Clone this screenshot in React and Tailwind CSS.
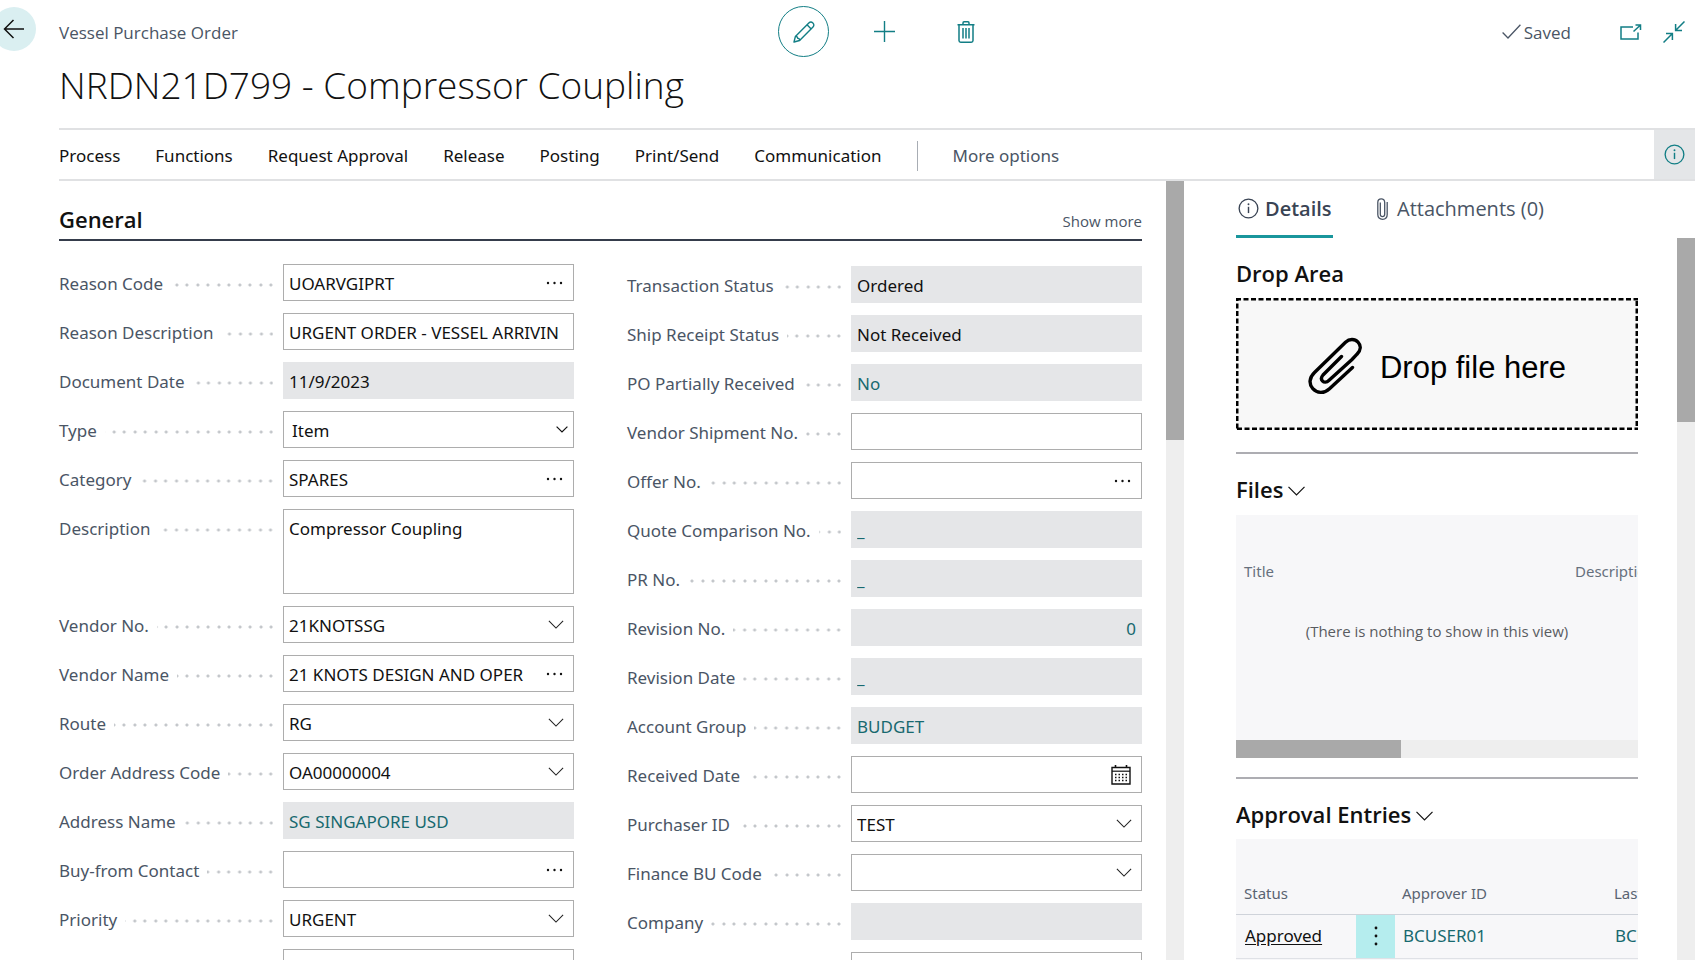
import React from "react";

const UI_FONT = "font-['Noto_Sans','Open_Sans',sans-serif]";
const HEADING_FONT = "font-['Open_Sans','Noto_Sans',sans-serif]";

function Chevron({ className }) {
  return (
    <svg viewBox="0 0 18 10" fill="none" stroke="currentColor" className={className} aria-hidden="true">
      <path d="M1 .8 9 9 17 .8" strokeWidth="1.2" />
    </svg>
  );
}

function SmallChevron({ className }) {
  return (
    <svg viewBox="0 0 12 7" fill="none" stroke="currentColor" className={className} aria-hidden="true">
      <path d="M.6.6 6 6 11.4.6" strokeWidth="1.2" />
    </svg>
  );
}

function Ellipsis({ className }) {
  return (
    <svg viewBox="0 0 17 4" fill="currentColor" className={className} aria-hidden="true">
      <circle cx="2" cy="2" r="1.2" />
      <circle cx="8.5" cy="2" r="1.2" />
      <circle cx="15" cy="2" r="1.2" />
    </svg>
  );
}

function CalendarIcon() {
  return (
    <svg viewBox="0 0 20 20" className="size-5" fill="none" stroke="currentColor" aria-hidden="true">
      <path d="M1 2.5h18V19H1z" strokeWidth="1.4" />
      <path d="M1 6.2h18" strokeWidth="1.2" />
      <path d="M4.5 0v3M15.5 0v3" strokeWidth="1.6" />
      <path d="M4 9.5h12.5M4 12.5h12.5M4 15.5h12.5" strokeWidth="1.3" strokeDasharray="1.5 2" />
    </svg>
  );
}

function InfoIcon({ className }) {
  return (
    <svg viewBox="0 0 22 22" fill="none" stroke="currentColor" className={className} aria-hidden="true">
      <circle cx="11" cy="11" r="9.8" strokeWidth="1.4" />
      <path d="M11 9.2v6.6" strokeWidth="1.5" />
      <circle cx="11" cy="6.6" r="1" fill="currentColor" stroke="none" />
    </svg>
  );
}

const leftFields = [
  { label: "Reason Code", value: "UOARVGIPRT", kind: "assist" },
  { label: "Reason Description", value: "URGENT ORDER - VESSEL ARRIVIN", kind: "text" },
  { label: "Document Date", value: "11/9/2023", kind: "readonly" },
  { label: "Type", value: "Item", kind: "option" },
  { label: "Category", value: "SPARES", kind: "assist" },
  { label: "Description", value: "Compressor Coupling", kind: "area" },
  { label: "Vendor No.", value: "21KNOTSSG", kind: "select" },
  { label: "Vendor Name", value: "21 KNOTS DESIGN AND OPER", kind: "assist" },
  { label: "Route", value: "RG", kind: "select" },
  { label: "Order Address Code", value: "OA00000004", kind: "select" },
  { label: "Address Name", value: "SG SINGAPORE USD", kind: "link" },
  { label: "Buy-from Contact", value: "", kind: "assist" },
  { label: "Priority", value: "URGENT", kind: "select" },
  { label: "", value: "", kind: "text" },
];

const rightFields = [
  { label: "Transaction Status", value: "Ordered", kind: "readonly" },
  { label: "Ship Receipt Status", value: "Not Received", kind: "readonly" },
  { label: "PO Partially Received", value: "No", kind: "link" },
  { label: "Vendor Shipment No.", value: "", kind: "text" },
  { label: "Offer No.", value: "", kind: "assist" },
  { label: "Quote Comparison No.", value: "_", kind: "link" },
  { label: "PR No.", value: "_", kind: "link" },
  { label: "Revision No.", value: "0", kind: "number" },
  { label: "Revision Date", value: "_", kind: "link" },
  { label: "Account Group", value: "BUDGET", kind: "link" },
  { label: "Received Date", value: "", kind: "date" },
  { label: "Purchaser ID", value: "TEST", kind: "select" },
  { label: "Finance BU Code", value: "", kind: "select" },
  { label: "Company", value: "", kind: "readonly" },
  { label: "", value: "", kind: "text" },
];

const readonlyBox = "block h-[37px] w-full bg-[#e5e6e8] px-[6px] pt-[2px] outline-none";
const editBox = "block h-[37px] w-full border border-[#adadad] bg-white";

function Control({ id, field }) {
  const { kind, value } = field;
  if (kind === "readonly") return <input id={id} readOnly value={value} className={`${readonlyBox} text-[#111]`} />;
  if (kind === "link") return <input id={id} readOnly value={value} className={`${readonlyBox} text-[#17696f]`} />;
  if (kind === "number")
    return <input id={id} readOnly value={value} className={`${readonlyBox} text-right text-[#17696f]`} />;
  if (kind === "area")
    return (
      <textarea
        id={id}
        defaultValue={value}
        className="block h-[85px] w-full resize-none border border-[#adadad] bg-white px-[5px] pt-[7px] leading-6 text-[#111] outline-none"
      />
    );
  if (kind === "text")
    return (
      <input
        id={id}
        aria-label={field.label || "Additional field"}
        defaultValue={value}
        className={`${editBox} px-[5px] pt-[2px] text-[#111] outline-none`}
      />
    );
  if (kind === "select" || kind === "option")
    return (
      <div className="relative">
        <select
          id={id}
          defaultValue={value}
          className={`${editBox} appearance-none pt-[2px] pr-9 text-[#111] outline-none ${kind === "option" ? "pl-[8px]" : "pl-[5px]"}`}
        >
          <option value={value}>{value}</option>
        </select>
        {kind === "option" ? (
          <SmallChevron className="pointer-events-none absolute top-[15px] right-[6px] h-[7px] w-3 text-[#111]" />
        ) : (
          <Chevron className="pointer-events-none absolute top-[14px] right-[10px] h-[9px] w-4 text-[#222]" />
        )}
      </div>
    );
  return (
    <div className={`${editBox} flex items-center pr-[10px] pl-[5px]`}>
      <input id={id} defaultValue={value} className="h-full min-w-0 flex-1 bg-transparent pt-[2px] text-[#111] outline-none" />
      <button type="button" aria-label={`Choose ${field.label}`} className="ml-3 shrink-0 pt-px text-[#111]">
        {kind === "date" ? <CalendarIcon /> : <Ellipsis className="h-1 w-[17px]" />}
      </button>
    </div>
  );
}

function FieldColumn({ fields, side }) {
  return (
    <div className="flex min-w-0 flex-col gap-3">
      {fields.map((field, i) => {
        const id = `${side}-field-${i}`;
        return (
          <div key={id} className="flex items-start">
            <div className="flex h-[37px] min-w-0 flex-1 items-center">
              <label htmlFor={id} className="pt-[3px] whitespace-nowrap text-[#4a5565]">
                {field.label}
              </label>
              {field.label && (
                <span className="mt-[5px] mr-[10px] ml-2 h-1 flex-1 bg-[radial-gradient(circle_at_9px_2px,#c3c6ca_1px,transparent_2px),radial-gradient(circle_at_19px_2px,#c3c6ca_1px,transparent_2px)] bg-[length:21px_4px] bg-right bg-repeat-x" />
              )}
            </div>
            <div className="w-[291px] shrink-0">
              <Control id={id} field={field} />
            </div>
          </div>
        );
      })}
    </div>
  );
}

function TopBar() {
  return (
    <div className="flex h-[57px] items-end">
      <div className="w-[59px] shrink-0 self-start pt-[7px]">
        <button type="button" aria-label="Back" className="-ml-2 flex size-11 items-center justify-center rounded-full bg-[#daeff1] text-[#111]">
          <svg viewBox="0 0 22 20" fill="none" stroke="currentColor" strokeWidth="1.5" className="h-5 w-[22px]" aria-hidden="true">
            <path d="M21 10H1.5M10.5 1 1.5 10l9 9" />
          </svg>
        </button>
      </div>
      <div className="grid h-[51px] flex-1 grid-cols-[1fr_auto_1fr] items-center">
        <div className={`pt-[2px] text-[#4a5565] ${HEADING_FONT}`}>Vessel Purchase Order</div>
        <div className="flex gap-[30px] text-[#127e85]">
          <button type="button" aria-label="Edit" className="flex size-[51px] items-center justify-center rounded-full border border-[#127e85]">
            <svg viewBox="0 0 22 22" fill="none" stroke="currentColor" strokeWidth="1.4" strokeLinejoin="round" className="size-[22px]" aria-hidden="true">
              <path d="M1 21 2.4 15.4 15.8 2c1.200-1.200 3-1.100 4.100-.1 1.200 1.100 1.300 3 .1 4.200L6.600 19.500z" />
              <path d="M14 3.800l4.200 4.200M2.500 15.500c1.700 0 2.300.6 2.200 1.900 1.300-.1 1.900.5 1.900 2.100" />
            </svg>
          </button>
          <button type="button" aria-label="New" className="flex size-[51px] items-center justify-center">
            <svg viewBox="0 0 21 21" fill="none" stroke="currentColor" strokeWidth="1.4" className="size-[21px]" aria-hidden="true">
              <path d="M10.5 0v21M0 10.5h21" />
            </svg>
          </button>
          <button type="button" aria-label="Delete" className="-mr-[15px] flex size-[51px] items-center justify-center">
            <svg viewBox="0 0 18 22" fill="none" stroke="currentColor" strokeWidth="1.5" className="h-[22px] w-[18px]" aria-hidden="true">
              <path d="M.5 3.8h17M6 3.6V1.9C6 1.2 6.4.8 7 .8h4c.6 0 1 .4 1 1.100v1.700M2 4v15.500c0 1 .6 1.700 1.700 1.700h10.600c1.100 0 1.700-.7 1.700-1.700V4" />
              <path d="M6 7v10.500M9 7v10.500M12 7v10.500" />
            </svg>
          </button>
        </div>
        <div className={`flex items-center justify-end text-[#4a5565] ${HEADING_FONT}`}>
          <svg viewBox="0 0 19 15" fill="none" stroke="currentColor" strokeWidth="1.3" className="h-[15px] w-[19px]" aria-hidden="true">
            <path d="M.6 8.5 6 14 18.4.8" />
          </svg>
          <span className="ml-[3px] pt-[2px]">Saved</span>
          <button type="button" aria-label="Open in new window" className="ml-[49px] text-[#127e85]">
            <svg viewBox="0 0 22 16" fill="none" stroke="currentColor" strokeWidth="1.5" className="h-4 w-[22px]" aria-hidden="true">
              <path d="M13 3H1v12h17V8.5M13.5 7.5 20 1.5M15.5 1H20.500v5" />
            </svg>
          </button>
          <button type="button" aria-label="Collapse" className="mr-[10px] ml-[21px] text-[#127e85]">
            <svg viewBox="0 0 22 22" fill="none" stroke="currentColor" strokeWidth="1.5" className="size-[22px]" aria-hidden="true">
              <path d="M21.500.5 12.800 9.200M12.600 3v6.400H19M.5 21.500l8.700-8.700M3 12.600h6.400V19" />
            </svg>
          </button>
        </div>
      </div>
    </div>
  );
}

const actions = ["Process", "Functions", "Request Approval", "Release", "Posting", "Print/Send", "Communication"];

function ActionBar() {
  return (
    <nav className="ml-[59px] flex h-[53px] shrink-0 items-stretch border-y-2 border-[#e0e1e3]">
      <div className="flex flex-1 items-center gap-[35px] pt-[2px] text-[#111]">
        {actions.map((a) => (
          <button type="button" key={a} className="whitespace-nowrap">
            {a}
          </button>
        ))}
        <span className="h-[30px] border-l border-[#a8adb4]" />
        <button type="button" className="whitespace-nowrap text-[#4a5565]">
          More options
        </button>
      </div>
      <button type="button" aria-label="Toggle details pane" className="flex w-[41px] items-center justify-center bg-[#e4e6e8] text-[#127e85]">
        <InfoIcon className="size-[21px]" />
      </button>
    </nav>
  );
}

function SectionHeading({ children }) {
  return (
    <h2 className={`flex h-8 items-center text-[22px] font-semibold text-[#111] ${HEADING_FONT}`}>
      {children}
      <Chevron className="mt-1 ml-1 h-[10px] w-[19px]" />
    </h2>
  );
}

function Files() {
  return (
    <section className="mt-[22px] border-t-2 border-[#adadb2] pt-[19px]">
      <SectionHeading>Files</SectionHeading>
      <div className="mt-[10px] h-[225px] overflow-hidden bg-[#f7f7f9]">
        <table className="w-[560px] table-fixed text-left text-[15px]">
          <thead>
            <tr className="h-[76px] align-bottom text-[#66707d]">
              <th className="w-[331px] pb-[9px] pl-2 font-normal">Title</th>
              <th className="pb-[9px] pl-2 font-normal">Description</th>
            </tr>
          </thead>
        </table>
        <p className={`mt-[29px] text-center text-[15px] text-[#595c61] ${HEADING_FONT}`}>(There is nothing to show in this view)</p>
      </div>
      <div className="h-[18px] bg-[#eeeeee]">
        <div className="h-full w-[165px] bg-[#a9a9a9]" />
      </div>
    </section>
  );
}

function Approvals() {
  return (
    <section className="mt-[19px] border-t-2 border-[#adadb2] pt-[19px]">
      <SectionHeading>Approval Entries</SectionHeading>
      <div className="mt-[9px] overflow-hidden bg-[#f7f7f9]">
        <table className="w-[560px] table-fixed text-left">
          <thead>
            <tr className="h-[75px] border-b border-[#cfd3da] align-bottom text-[15px] text-[#5a6472]">
              <th className="w-[120px] pb-[9px] pl-2 font-normal">Status</th>
              <th className="w-[39px]" />
              <th className="w-[212px] pb-[9px] pl-[7px] font-normal">Approver ID</th>
              <th className="pb-[9px] pl-[7px] font-normal">Last Modified</th>
            </tr>
          </thead>
          <tbody>
            <tr className="h-[44px] border-b border-[#dfe1e6]">
              <td className="pl-[9px]">
                <a href="#approved" className="text-[#111] underline underline-offset-2">Approved</a>
              </td>
              <td className="bg-[#b5edee] text-center">
                <button type="button" aria-label="Row actions" className="block w-full">
                  <svg viewBox="0 0 4 20" className="mx-auto h-5 w-1" fill="#111" aria-hidden="true">
                    <circle cx="2" cy="2" r="1.4" />
                    <circle cx="2" cy="10" r="1.4" />
                    <circle cx="2" cy="18" r="1.4" />
                  </svg>
                </button>
              </td>
              <td className="pl-2 text-[#17696f]">BCUSER01</td>
              <td className="pl-2 text-[#17696f]">BCUSER01</td>
            </tr>
            <tr className="h-[44px]"><td /><td /><td /><td /></tr>
          </tbody>
        </table>
      </div>
    </section>
  );
}

function DetailsPane() {
  return (
    <aside className="flex w-[511px] shrink-0 flex-col pl-[52px]">
      <div className={`flex h-[57px] shrink-0 items-stretch gap-[44px] text-[20px] text-[#4a5565] ${HEADING_FONT}`}>
        <button type="button" className="flex w-[97px] items-center border-b-[3px] border-[#19969c] pt-px pl-[2px] font-semibold whitespace-nowrap text-[#3a4454]">
          <InfoIcon className="mr-[6px] size-[21px] shrink-0" />
          Details
        </button>
        <button type="button" className="flex items-center border-b-[3px] border-transparent pt-px whitespace-nowrap">
          <svg viewBox="0 0 11 22" fill="none" stroke="currentColor" strokeWidth="1.3" className="mr-[9px] h-[22px] w-[11px]" aria-hidden="true">
            <path d="M10.200 4v12.500c0 3-1.900 4.800-4.700 4.800S.8 19.500.8 16.500V4.500C.8 2.200 2 .8 4.200.8s3.500 1.400 3.500 3.700v11.800c0 1.500-.8 2.300-2.200 2.300s-2.200-.8-2.200-2.300V4.500" />
          </svg>
          Attachments (0)
        </button>
      </div>
      <div className="flex min-h-0 flex-1">
        <div className="min-w-0 flex-1 overflow-hidden pt-[19px]">
          <h2 className={`flex h-8 items-center text-[22px] font-semibold text-[#111] ${HEADING_FONT}`}>Drop Area</h2>
          <button type="button" className="relative mt-[9px] flex h-[132px] w-full items-center justify-center gap-[18px] bg-[#f8f8f8] pt-1 font-['Liberation_Sans',sans-serif] text-[31px] text-black">
            <svg className="pointer-events-none absolute inset-0 size-full" fill="none" stroke="currentColor" aria-hidden="true">
              <rect width="100%" height="100%" strokeWidth="5" strokeDasharray="5 2.5" />
            </svg>
            <svg viewBox="0 0 54 58" fill="none" stroke="currentColor" strokeWidth="3.4" strokeLinecap="round" className="h-[58px] w-[54px]" aria-hidden="true">
              <path d="M33.500 19.500 15 38c-2 2.300-1.800 4.700-.4 6.100s4.100 1.500 6.200-.5L44 22.500l5-5.300c4-4 4.200-8.700 1-12.100S41.500 1.500 37.500 5.200L6.500 35.500c-5.500 5.300-5.700 11.700-1.700 16.200s11.200 5.300 16.700 0L44.500 30.500" />
            </svg>
            <span className="pt-1">Drop file here</span>
          </button>
          <Files />
          <Approvals />
        </div>
        <div className="ml-[39px] w-[18px] bg-[#eeeeee]">
          <div className="h-[184px] bg-[#a9a9a9]" />
        </div>
      </div>
    </aside>
  );
}

export default function App() {
  return (
    <div className={`flex h-screen flex-col overflow-hidden bg-white pr-[11px] text-[17px] ${UI_FONT}`}>
      <TopBar />
      <h1 className={`ml-[59px] flex h-[71px] shrink-0 items-start pt-[2px] text-[37px] leading-[52px] font-light text-[#111] ${HEADING_FONT}`}>
        NRDN21D799 - Compressor Coupling
      </h1>
      <ActionBar />
      <div className="flex min-h-0 flex-1">
        <main className="min-w-0 flex-1 overflow-hidden pr-[24px] pl-[59px]">
          <div className="flex h-[60px] items-end justify-between border-b-2 border-[#353c4b] pb-1">
            <h2 className={`text-[22px] leading-8 font-semibold text-[#111] ${HEADING_FONT}`}>General</h2>
            <button type="button" className={`text-[15px] leading-7 text-[#4a5565] ${HEADING_FONT}`}>Show more</button>
          </div>
          <div className="mt-[23px] grid grid-cols-2 gap-x-[53px]">
            <FieldColumn fields={leftFields} side="left" />
            <div className="pt-[2px]">
              <FieldColumn fields={rightFields} side="right" />
            </div>
          </div>
        </main>
        <div className="w-[18px] shrink-0 bg-[#eeeeee]">
          <div className="h-[259px] bg-[#a9a9a9]" />
        </div>
        <DetailsPane />
      </div>
    </div>
  );
}
